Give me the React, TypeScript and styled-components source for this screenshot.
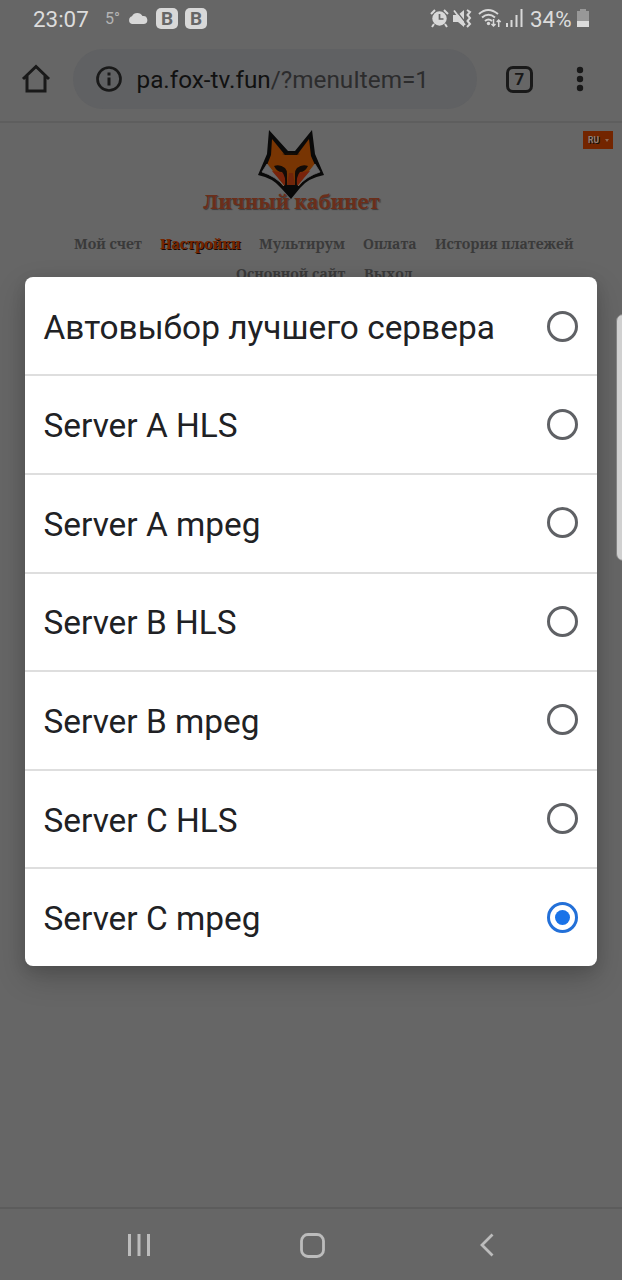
import React, { useState } from 'react';
import styled, { createGlobalStyle } from 'styled-components';

const GlobalStyle = createGlobalStyle`
  * { box-sizing: border-box; }
  body { margin: 0; background: #666; font-family: Roboto, "Liberation Sans", sans-serif; }
`;

const Screen = styled.div`
  position: relative;
  width: 622px;
  height: 1280px;
  display: flex;
  flex-direction: column;
  overflow: hidden;
  background: #666;
`;

const StatusBar = styled.div`
  height: 38px;
  padding: 0 33px 0 33px;
  display: flex;
  align-items: center;
  justify-content: space-between;
  color: #dcdcdc;
`;

const StatusGroup = styled.div`
  display: flex;
  align-items: center;
  height: 38px;
`;

const StatusText = styled.span<{ $size: number; $width: number; $dim?: boolean }>`
  font-size: ${p => p.$size}px;
  width: ${p => p.$width}px;
  line-height: 38px;
  white-space: nowrap;
  color: ${p => (p.$dim ? '#b4b4b4' : '#dcdcdc')};
`;

const AppBadge = styled.span`
  width: 22px;
  height: 21px;
  margin: -2px 7px 0 0;
  border-radius: 5px;
  background: #d8d8d8;
  color: #666;
  font-size: 19px;
  font-weight: 700;
  line-height: 22px;
  text-align: center;
`;

const Icon = styled.svg<{ $mr?: number; $mt?: number }>`
  display: block;
  flex: none;
  overflow: visible;
  margin-right: ${p => p.$mr ?? 0}px;
  margin-top: ${p => p.$mt ?? 0}px;
`;

const Toolbar = styled.div`
  height: 85px;
  padding: 11px 0 0 22px;
  display: flex;
  align-items: flex-start;
  border-bottom: 2px solid #5e5e5e;
`;

const ToolButton = styled.div<{ $width: number; $mr?: number }>`
  width: ${p => p.$width}px;
  height: 60px;
  margin-right: ${p => p.$mr ?? 0}px;
  display: flex;
  align-items: center;
  justify-content: center;
`;

const AddressBar = styled.div`
  width: 404px;
  height: 60px;
  margin-right: 29px;
  padding-left: 23px;
  display: flex;
  align-items: center;
  border-radius: 30px;
  background: #606163;
`;

const Url = styled.span`
  margin-left: 14.5px;
  padding-top: 2px;
  font-size: 24.3px;
  line-height: 60px;
  white-space: nowrap;
  color: #111;
  span { color: #2c2c2d; }
`;

const TabCount = styled.div`
  width: 27px;
  height: 27px;
  border: 3px solid #191919;
  border-radius: 7px;
  color: #191919;
  font-size: 17px;
  font-weight: 700;
  line-height: 21px;
  text-align: center;
`;

const Page = styled.main`
  flex: 1;
  display: flex;
  flex-direction: column;
  align-items: center;
  position: relative;
  font-family: "Noto Serif", "DejaVu Serif Condensed", "DejaVu Serif", serif;
  font-stretch: condensed;
`;

const Language = styled.div`
  position: absolute;
  right: 9px;
  top: 8px;
  width: 30px;
  height: 18px;
  padding: 0 4px 0 5px;
  display: flex;
  align-items: center;
  justify-content: space-between;
  background: #732500;
  color: #8c8077;
  font: 700 8.5px Roboto, sans-serif;
  text-shadow: 1px 1px 0 #111;
`;

const Caret = styled.span`
  border: 2px solid transparent;
  border-top: 3px solid #8c6b58;
  border-bottom: 0;
`;

const Logo = styled.svg`
  display: block;
  width: 68px;
  height: 71px;
  margin: 6px 40px 0 0;
`;

const Title = styled.h1`
  margin: -12px 39px 0 0;
  font-size: 19.9px;
  line-height: 28px;
  font-weight: 700;
  white-space: nowrap;
  color: #6b2e1a;
  text-shadow: 1px 1px 1px #3c3c3c;
  position: relative;
`;

const Menu = styled.nav`
  margin: 13px 0 0 26px;
  width: 520px;
  display: flex;
  flex-wrap: wrap;
  justify-content: center;
  column-gap: 18px;
`;

const MenuItem = styled.a<{ $active?: boolean; $width: number }>`
  width: ${p => p.$width}px;
  height: 30px;
  line-height: 30px;
  font-size: 14.1px;
  font-weight: 700;
  white-space: nowrap;
  color: ${p => (p.$active ? '#762500' : '#3a3a3a')};
  text-shadow: ${p => (p.$active ? '1px 1px 0 #180800' : 'none')};
`;

const Dialog = styled.div`
  position: absolute;
  left: 25px;
  top: 277px;
  width: 572px;
  height: 689px;
  display: flex;
  flex-direction: column;
  border-radius: 8px;
  background: #fff;
  box-shadow: 0 12px 30px rgba(0, 0, 0, 0.2), 0 4px 14px rgba(0, 0, 0, 0.1);
`;

const Option = styled.div`
  height: 98.6px;
  padding: 2px 19px 0 18.5px;
  display: flex;
  align-items: center;
  justify-content: space-between;
  color: #202124;
  font-size: 33.4px;
  &:first-child { height: 97.4px; padding-top: 4px; }
  & + & { border-top: 2px solid #dedede; }
`;

const Radio = styled.span<{ $checked: boolean }>`
  width: 31px;
  height: 31px;
  margin-top: -3px;
  display: flex;
  align-items: center;
  justify-content: center;
  border: 3px solid ${p => (p.$checked ? '#2370d8' : '#5f6165')};
  border-radius: 50%;
  &::after {
    content: "";
    width: 15px;
    height: 15px;
    border-radius: 50%;
    background: ${p => (p.$checked ? '#1a73e8' : 'transparent')};
  }
`;

const EdgeHandle = styled.div`
  position: absolute;
  left: 616px;
  top: 314px;
  width: 14px;
  height: 247px;
  border: 1px solid #858585;
  border-radius: 7px;
  background: #d2d2d2;
`;

const NavBar = styled.div`
  height: 73px;
  padding: 1px 128px 0 128px;
  display: flex;
  align-items: center;
  border-top: 2px solid #5c5c5c;
`;

const menu = [
  { label: 'Мой счет', width: 68 },
  { label: 'Настройки', width: 81, active: true },
  { label: 'Мультирум', width: 86 },
  { label: 'Оплата', width: 54 },
  { label: 'История платежей', width: 139 },
  { label: 'Основной сайт', width: 110 },
  { label: 'Выход', width: 48 },
];

const servers = [
  'Автовыбор лучшего сервера',
  'Server A HLS',
  'Server A mpeg',
  'Server B HLS',
  'Server B mpeg',
  'Server C HLS',
  'Server C mpeg',
];

const Fox = () => (
  <Logo viewBox="0 0 68 71">
    <path d="M12 1 31 22H38L55 1 58 25 67 46Q51 49 43 59L34 70 24 59Q16 49 1 46L10 25Z" fill="#090909" />
    <path d="M15 10 28 26H40L52 10 54 27 58 36 50 47 42 57H26L18 47 10 36 14 26Z" fill="#783503" />
    <path d="M10 35Q17 44 27 57Q18 47 5 43ZM58 35Q50 45 41 57Q50 47 63 43Z" fill="#69696b" stroke="#69696b" strokeWidth="0.800" />
    <path d="M15 42 28 44 28 57ZM53 42 40 44 40 57Z" fill="#78230b" />
    <path d="M32 44H36L38 57H30Z" fill="#70250a" />
    <path d="M17 37Q23 35 28 39Q30 41 30 45L30 57H28Q29 47 25 43Q20 43 17 37ZM51 37Q45 35 40 39Q38 41 38 45L38 57H40Q39 47 43 43Q48 43 51 37Z" fill="#120b07" />
    <path d="M25 25Q34 23 43 25Q34 27 25 25Z" fill="#160d05" />
    <path d="M27 56H41L34 68Z" fill="#090909" />
  </Logo>
);

export default function App() {
  const [selected, setSelected] = useState(6);
  return (
    <Screen>
      <GlobalStyle />
      <StatusBar>
        <StatusGroup>
          <StatusText $size={22.4} $width={72}>23:07</StatusText>
          <StatusText $size={16} $width={23} $dim>5°</StatusText>
          <Icon width="20" height="12" viewBox="0 0 20 12" $mr={8} $mt={-3}>
            <path d="M4 12a4 4 0 0 1 0-7.7A6 6 0 0 1 14.5 4 4 4 0 0 1 16 12Z" fill="#d8d8d8" />
          </Icon>
          <AppBadge>B</AppBadge>
          <AppBadge>B</AppBadge>
        </StatusGroup>
        <StatusGroup>
          <Icon width="19" height="19" viewBox="0 0 19 19" $mr={4} $mt={-1}>
            <circle cx="9.5" cy="9.5" r="7.2" fill="#d8d8d8" />
            <path d="M1 5 5 1M18 5l-4-4M4 15l-2 3M15 15l2 3" stroke="#d8d8d8" strokeWidth="2" />
            <path d="M9.5 5v5h4" stroke="#666" strokeWidth="1.7" fill="none" />
          </Icon>
          <Icon width="18" height="19" viewBox="0 0 18 19" $mr={7} $mt={-1}>
            <path d="M0 6h5l6-5v17l-6-5H0Z" fill="#d8d8d8" />
            <path d="M2.500 1 13 14" stroke="#666" strokeWidth="1.200" />
            <path d="M1 1.500 12 16" stroke="#d8d8d8" strokeWidth="1.8" />
            <path d="m14 1 3 2-2.5 3L17 9l-2.5 3 2.5 3-3 3" fill="none" stroke="#d8d8d8" strokeWidth="2" />
          </Icon>
          <Icon width="24" height="18" viewBox="0 0 24 18" $mr={4} $mt={-2}>
            <g fill="none" stroke="#d8d8d8" strokeWidth="2">
              <path d="M1 5Q10-3 20 5M4 8.5Q10.5 3 17 8.5M7 12q3.500-3 7 0" />
              <path d="M15.500 10v7m-2-2 2 2 2-2M20.700 18v-7m-2 2 2-2 2 2" strokeWidth="1.5" />
            </g>
            <circle cx="10.500" cy="14.500" r="1.700" fill="#d8d8d8" />
          </Icon>
          <Icon width="17" height="18" viewBox="0 0 17 18" $mr={7} $mt={-2}>
            <path d="M1 14v4M5.500 11v7M10.500 6v12M15.500 0v18" stroke="#d8d8d8" strokeWidth="2" />
          </Icon>
          <StatusText $size={22.4} $width={47}>34%</StatusText>
          <Icon width="12" height="18" viewBox="0 0 12 18" $mt={-2}>
            <path d="M3 0h6v2h3v16H0V2h3Z" fill="#989898" />
            <path d="M0 12h12v6H0Z" fill="#dcdcdc" />
          </Icon>
        </StatusGroup>
      </StatusBar>

      <Toolbar>
        <ToolButton $width={30} $mr={21}>
          <Icon width="28" height="28" viewBox="0 0 28 28" $mr={2}>
            <path d="M1 14 14 1.500 27 14M5 11v15h18V11" fill="none" stroke="#191919" strokeWidth="3" />
          </Icon>
        </ToolButton>
        <AddressBar>
          <Icon width="26" height="26" viewBox="0 0 26 26">
            <circle cx="13" cy="13" r="11.500" fill="none" stroke="#191919" strokeWidth="2.700" />
            <path d="M13 6.500v3M13 11.500v8" stroke="#191919" strokeWidth="3" />
          </Icon>
          <Url>pa.fox-tv.fun<span>/?menuItem=1</span></Url>
        </AddressBar>
        <ToolButton $width={27} $mr={41}>
          <TabCount>7</TabCount>
        </ToolButton>
        <ToolButton $width={12}>
          <Icon width="8" height="26" viewBox="0 0 8 26" fill="#191919">
            <circle cx="4" cy="4" r="3.200" /><circle cx="4" cy="13" r="3.200" /><circle cx="4" cy="22" r="3.200" />
          </Icon>
        </ToolButton>
      </Toolbar>

      <Page>
        <Language>RU<Caret /></Language>
        <Fox />
        <Title>Личный кабинет</Title>
        <Menu>
          {menu.map(m => <MenuItem key={m.label} $width={m.width} $active={m.active}>{m.label}</MenuItem>)}
        </Menu>
      </Page>

      <NavBar>
        <Icon width="22" height="24" viewBox="0 0 22 24" $mr={150}>
          <path d="M1.500 1v22M11 1v22M20.500 1v22" stroke="#bcbcbc" strokeWidth="3" />
        </Icon>
        <Icon width="25" height="25" viewBox="0 0 25 25" $mr={155}>
          <rect x="1.500" y="1.500" width="22" height="22" rx="6.500" fill="none" stroke="#bcbcbc" strokeWidth="2.800" />
        </Icon>
        <Icon width="14" height="24" viewBox="0 0 14 24">
          <path d="M12.500 1.500 2 12l10.500 10.500" fill="none" stroke="#bcbcbc" strokeWidth="2.800" />
        </Icon>
      </NavBar>

      <EdgeHandle />
      <Dialog role="radiogroup">
        {servers.map((s, i) => (
          <Option key={s} role="radio" aria-checked={i === selected} onClick={() => setSelected(i)}>
            <span>{s}</span>
            <Radio $checked={i === selected} />
          </Option>
        ))}
      </Dialog>
    </Screen>
  );
}
